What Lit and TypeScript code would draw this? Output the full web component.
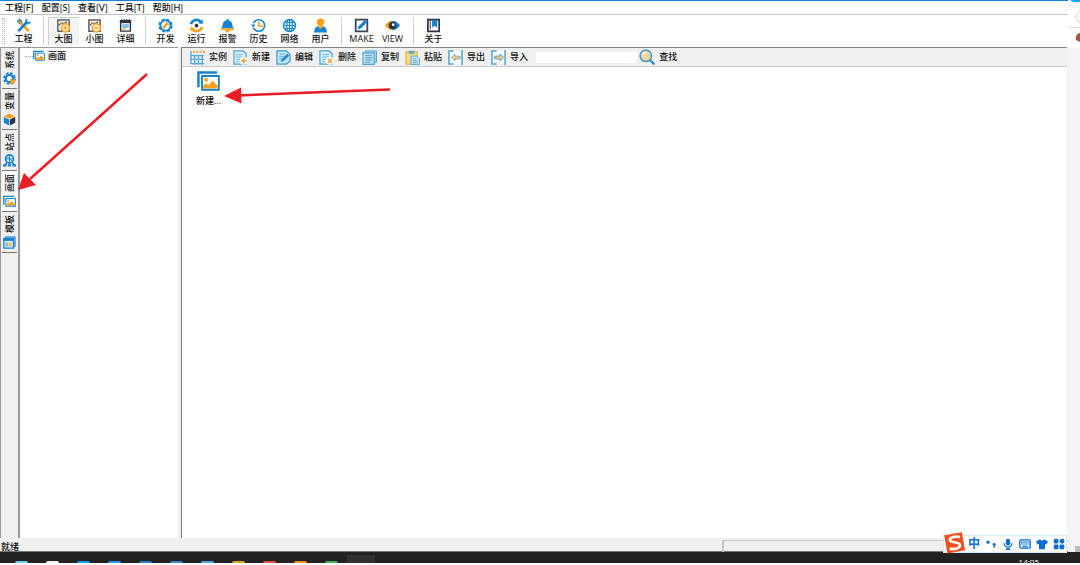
import { LitElement, html, css, svg } from "lit";
import { customElement, state } from "lit/decorators.js";

const B = "#1583cf";
const N = "#2b3440";
const O = "#f9a11b";

const icons: Record<string, unknown> = {
  tools: svg`<path d="M5 5 13.500 14" stroke=${O} stroke-width="3" fill="none"/><path d="M12 4 2.500 14" stroke=${B} stroke-width="2.800" fill="none"/><path d="M1.200 2.600 4 5.400 5.600 3.600 2.900 1M11.500 1l-1 3.400 2 1.400 3-1.600" stroke=${B} stroke-width="1.900" fill="none"/><path d="M2 2l3.500 3.500" stroke=${O} stroke-width="1.500"/>`,
  big: svg`<path d="M2 2h12v12H2z" fill="#fff" stroke="#59606a" stroke-width="1.6"/><path d="m3 8 3-3 2 1 4-2" stroke="#59606a" stroke-width="1.2" fill="none"/><circle cx="5.500" cy="4.800" r="1" fill=${O}/><circle cx="10" cy="10.500" r="4.400" fill="#ffe9c8" stroke=${O} stroke-width="1.6"/><path d="M7.500 10.500h5M10 8v5" stroke=${O} stroke-width="1.4"/>`,
  small: svg`<path d="M2 2h12v12H2z" fill="#fff" stroke="#59606a" stroke-width="1.6"/><path d="m3 8 3-3 2 1 4-2" stroke="#59606a" stroke-width="1.2" fill="none"/><circle cx="5.500" cy="4.800" r="1" fill=${O}/><circle cx="10" cy="10.500" r="4.400" fill="#ffe9c8" stroke=${O} stroke-width="1.6"/><path d="M7.500 10.500h5" stroke=${O} stroke-width="1.4"/>`,
  detail: svg`<path d="M2.8 3h10.4v11H2.8z" fill="#fff" stroke=${N} stroke-width="1.5"/><path d="M2 2.2h12v3.3H2z" fill=${N}/><path d="M4 2.2V1M6.7 2.2V1M9.4 2.2V1M12 2.2V1" stroke=${N}/><path d="M4.5 7.5h7M4.5 9.5h7" stroke=${B} stroke-width="1.1"/><path d="M4.5 11.8h4" stroke=${O} stroke-width="1.2"/>`,
  dev: svg`<circle cx="8" cy="8" r="5.4" fill="#fff" stroke=${B} stroke-width="1.8"/><circle cx="8" cy="8" r="6.8" fill="none" stroke=${B} stroke-width="1.6" stroke-dasharray="3.4 1.94"/><path d="M5.500 10.800 9.800 6.200" stroke=${O} stroke-width="2.4"/><path d="m8.600 4.500 3 3" stroke=${O} stroke-width="1.6"/>`,
  run: svg`<path d="M2 6.500C3.500 1.500 10 .5 12.800 4.200" stroke=${B} stroke-width="2.8" fill="none"/><path d="m14.800 1.500-.3 5-4.700-1z" fill=${B}/><path d="M14 9.500c-1.500 5-8 6-10.800 2.300" stroke=${O} stroke-width="2.8" fill="none"/><path d="m1.200 14.500.3-5 4.700 1z" fill=${O}/><circle cx="8" cy="8" r="2" fill=${N}/>`,
  bell: svg`<path d="M7 1h2v1.300c2.800.5 4.200 2.700 4.200 5.200 0 1.800.8 2.600 1.800 3.500H1c1-.9 1.800-1.700 1.800-3.500C2.800 5 4.200 2.800 7 2.300z" fill=${B}/><path d="M1 11h14v2H1z" fill=${O}/><path d="M5.500 13h5a2.500 2.500 0 0 1-5 0z" fill=${O}/>`,
  history: svg`<circle cx="8.300" cy="8" r="6.200" fill="#fff" stroke=${B} stroke-width="1.7"/><path d="M.5 5.500h4v5h-4z" fill="#fff"/><path d="m0 7 2.300 3L4.800 7z" fill=${B}/><path d="M8.500 4v4.500h4" stroke=${O} stroke-width="1.800" fill="none"/>`,
  net: svg`<circle cx="8" cy="8" r="6.500" fill="#d9eefb" stroke=${B} stroke-width="1.400"/><ellipse cx="8" cy="8" rx="3" ry="6.300" fill="none" stroke=${B} stroke-width="1.100"/><path d="M8 1.700v12.600M2 8h12M3 4.800h10M3 11.200h10" stroke=${B}/>`,
  user: svg`<circle cx="8" cy="4.500" r="4" fill=${O}/><path d="M1.200 15.500c0-4 1.500-6.500 4-6.500h5.600c2.500 0 4 2.500 4 6.500z" fill=${B}/><path d="M6 8h4v2l-2 2-2-2z" fill=${O}/>`,
  make: svg`<path d="M1.800 1.800h12.400v12.400H1.800z" fill="#fff" stroke="#39445a" stroke-width="1.9"/><path d="m4 12 .8-3.300L11.500 2 14 4.500 7.300 11.200z" fill=${B}/>`,
  view: svg`<path d="M0 8C3.500 3.500 6 3 8 3v10C5 13 2.500 11 0 8z" fill=${O}/><path d="M16 8C12.500 3.500 10 3 8 3v10c3 0 5.500-2 8-5z" fill=${B}/><circle cx="8" cy="8" r="4" fill=${N}/><circle cx="8.800" cy="7.200" r="1.500" fill="#fff"/>`,
  about: svg`<path d="M2 1.800h12v12.400H2z" fill="#fff" stroke=${N} stroke-width="1.8"/><path d="M4.500 2v10" stroke=${N}/><path d="M6.500 2h5.500v8.500L9.200 8.300l-2.700 2.200z" fill=${B}/>`,
  sample: svg`<path d="M1 1v14M1 6h14M1 10h14M1 14.500h14M5 5v11M9 5v11M13 5v11" stroke="#58a9dc" stroke-width="1.5"/><path d="M3 2h13" stroke="#e9ae59" stroke-width="2.4" stroke-dasharray="2.200 1.400"/>`,
  add: svg`<path d="M1 1h10l3 3v11H1z" fill="#d6edf9" stroke="#4da3d8" stroke-width="1.3"/><path d="M3.500 5h7M3.500 7.500h7M3.500 10h4M3.500 12.500h3" stroke="#6ab4df"/><circle cx="11.500" cy="11.500" r="4.300" fill="#fff"/><path d="M8.500 11.500h6M11.500 8.500v6" stroke="#eda746" stroke-width="1.800"/>`,
  edit: svg`<path d="M1 1h10l4 4v7l-4 3H1z" fill="#bfe2f5" stroke="#3c9bd6" stroke-width="1.3"/><path d="M3.500 4.500h6M3.500 7h5M3.500 9.500h3" stroke="#6ab4df"/><path d="m5 12.800 1-3L12 4l2 2-6 5.800z" fill="#2684b8"/>`,
  del: svg`<path d="M1 1h10l3 3v11H1z" fill="#d6edf9" stroke="#4da3d8" stroke-width="1.3"/><path d="M3.500 5h7M3.500 7.500h7M3.500 10h4M3.500 12.500h3" stroke="#6ab4df"/><circle cx="11.500" cy="11.500" r="4.300" fill="#fff"/><path d="m9.300 9.300 4.600 4.600M13.900 9.300l-4.600 4.600" stroke="#eda746" stroke-width="1.700"/>`,
  copy: svg`<path d="M3.500 1h12v12h-12z" fill="#a9d5ef" stroke="#4da3d8"/><path d="M1 3h12v12.300H1z" fill="#bfe0f3" stroke="#4da3d8" stroke-width="1.2"/><path d="M3.500 6h7M3.500 8.300h7M3.500 10.600h7M3.500 12.900h5" stroke="#4a9ccf"/>`,
  paste: svg`<path d="M1 2h12v13H1z" fill="#f6dc83" stroke="#dfb743" stroke-width="1.3"/><path d="M4 .8h6V4H4z" fill="#55a7cb"/><path d="M6.500 6.500h6l3 3v6h-9z" fill="#c8e4f3" stroke="#5aa7d0"/><path d="M8.500 9.500h3M8.500 11.500h5M8.500 13.500h5" stroke="#5aa7d0"/>`,
  exp: svg`<path d="M1 1h14v14H1z" fill="#fff"/><path d="M6 1H1v14h5M15 0v16" stroke="#4da3d8" stroke-width="1.6" fill="none"/><path d="m3.500 8 4-3.700v2.200H13v3H7.500v2.200z" fill="#f5ca82" stroke="#61a4bd" stroke-width=".8"/>`,
  imp: svg`<path d="M1 1h14v14H1z" fill="#fff"/><path d="M6 1H1v14h5M15 0v16" stroke="#4da3d8" stroke-width="1.6" fill="none"/><path d="m13.500 8-4-3.700v2.200H4v3h5.500v2.200z" fill="#f5ca82" stroke="#3f97cf" stroke-width=".9"/>`,
  search: svg`<path d="m11 11 4.500 4.500" stroke="#2b86c0" stroke-width="2.200"/><circle cx="6.800" cy="6.800" r="5.700" fill="#f5d6a0" stroke="#4b98c9" stroke-width="1.600"/><path d="M4 6a3 3 0 0 1 3-2.500" stroke="#fff" stroke-width="1.500" fill="none"/>`,
  picture: svg`<path d="M1 12V1.700h13" stroke=${B} stroke-width="1.700" fill="none"/><path d="M3.500 4.200h11.700v9.500H3.500z" fill="#fff" stroke=${B} stroke-width="1.300"/><path d="M4.300 12.900V11l2.200-1.800 1.700 1.300 2.600-3.200 3.600 3.700v1.900z" fill=${O}/><circle cx="6.300" cy="6.800" r="1.300" fill=${O}/>`,
  gear: svg`<circle cx="8" cy="8" r="4.500" fill="#fff" stroke=${B} stroke-width="2.700"/><circle cx="8" cy="8" r="6.700" fill="none" stroke=${B} stroke-width="2.200" stroke-dasharray="3.200 2.060"/><path d="m9 9 5 5M9.500 14.500l5-5" stroke=${O} stroke-width="2.800"/>`,
  cube: svg`<path d="m8 1 7 3-7 3-7-3z" fill=${O}/><path d="m1 5 6.500 3v7.500L1 12z" fill=${B}/><path d="M15 5 8.500 8v7.500L15 12z" fill=${N}/>`,
  station: svg`<circle cx="8" cy="6" r="4.900" fill="#cfe8f8" stroke=${B} stroke-width="2"/><path d="M3.500 6h9M8 1.500v9M5 3.500l6 5" stroke=${B}/><path d="m5 10-3 4.500M11 10l3 4.500M8 11v3" stroke=${B} stroke-width="2"/><path d="M0 14h4.500M11.500 14H16M6 14h4" stroke=${B} stroke-width="2.500"/>`,
  template: svg`<path d="M3 1h12v12H3z" fill="#8ac5e8" stroke=${B}/><path d="M1 3h12v12H1z" fill="#d8ebf4" stroke=${B} stroke-width="1.500"/><path d="M1 3h12v3H1z" fill=${B}/><path d="M3 8h3v5H3z" fill="#7fbce0"/><path d="M7 8h4v5H7z" fill="#f3bd69"/>`,
  comma: svg`<circle cx="4" cy="5.500" r="2.200" fill="#0b6fd6"/><path d="M10 8.500a2 2 0 1 1 4.300.5c-.2 2.200-1.300 3.800-3.300 4.500l-.5-1c1-.6 1.500-1.300 1.500-2.200-1.200 0-2-.8-2-1.800z" fill="#0b6fd6"/>`,
  mic: svg`<rect x="5" y="1" width="6" height="9" rx="3" fill="#0b6fd6"/><path d="M2.800 7a5.200 5.200 0 0 0 10.400 0M8 12v3M5 15h6" stroke="#0b6fd6" stroke-width="1.700" fill="none"/>`,
  keyboard: svg`<rect x="1" y="2.500" width="14" height="11" rx="1.500" fill="#dcecfb" stroke="#0b6fd6" stroke-width="1.700"/><path d="M3 5.500h10M3 8h10" stroke="#0b6fd6" stroke-width="1.500" stroke-dasharray="1.800 1"/><path d="M4.500 11h7" stroke="#0b6fd6" stroke-width="1.500"/>`,
  shirt: svg`<path d="m5 1.500 3 2 3-2 5 3-2 4-2-.8V15H4V7.700l-2 .8-2-4z" fill="#0b6fd6"/>`,
  apps: svg`<g fill="#0b6fd6"><rect x="1" y="1" width="6.300" height="6.300" rx="2"/><circle cx="12" cy="4.200" r="3.300"/><rect x="1" y="8.700" width="6.300" height="6.300" rx="1.500"/><rect x="8.700" y="8.700" width="6.300" height="6.300" rx="1.500"/></g>`,
  sogou: svg`<path d="M.5 2.400 13.300.2l2.400 13L2.800 15.600z" fill="#f0501e"/><path d="M12 3.600C8.500 3 4.500 3.500 4.600 5.700c.2 2.400 7.200 1.200 7.400 3.900.2 2.300-4 3.200-7.500 2.500" stroke="#fff" stroke-width="1.900" fill="none"/>`,
};

const icon = (name: string, cls = "") =>
  html`<svg class="icon ${cls}" viewBox="0 0 16 16" aria-hidden="true">${icons[name]}</svg>`;

const menus = ["工程[F]", "配置[S]", "查看[V]", "工具[T]", "帮助[H]"];

const groups = [
  [["tools", "工程"]],
  [["big", "大图"], ["small", "小图"], ["detail", "详细"]],
  [["dev", "开发"], ["run", "运行"], ["bell", "报警"], ["history", "历史"], ["net", "网络"], ["user", "用户"]],
  [["make", "MAKE"], ["view", "VIEW"]],
  [["about", "关于"]],
];

const actions = [
  ["sample", "实例"], ["add", "新建"], ["edit", "编辑"], ["del", "删除"],
  ["copy", "复制"], ["paste", "粘贴"], ["exp", "导出"], ["imp", "导入"],
];

const tabs = [
  ["gear", "系统"], ["cube", "变量"], ["station", "站点"], ["picture", "画面"], ["template", "模板"],
];

const taskColors = [
  "#6fd0f5", "#f4f4f4", "#17a2e6", "#2a93ee", "#2580c8", "#3d85d6",
  "#4da6ee", "#d9a322", "#e8533f", "#f08a24", "#3fae5c",
];

@customElement("app-root")
export class AppRoot extends LitElement {
  @state() private size = "大图";
  @state() private tab = "画面";

  static styles = css`
    :host {
      display: grid;
      grid-template-columns: minmax(0, 1fr) 12px;
      grid-template-rows: minmax(0, 1fr) 11px;
      position: relative;
      box-sizing: border-box;
      height: 100vh;
      padding-bottom: 2px;
      overflow: hidden;
      background: #fff;
      color: #111;
      font: 500 9px/12px "Open Sans", "Noto Sans CJK SC", sans-serif;
    }
    button, input { font: inherit; color: inherit; border: 0; margin: 0; padding: 0; background: none; }
    .icon { display: block; width: 15px; height: 15px; flex: none; }
    .window { display: flex; flex-direction: column; min-height: 0; border-top: 1px solid #1380dc; background: #f0f0f0; }
    .menu { display: flex; gap: 8px; height: 13px; padding-left: 5px; background: #fff; border-bottom: 1px solid #c4c4c4; font-family: Lato, "Noto Sans CJK SC", sans-serif; }
    .menu button { line-height: 13px; white-space: nowrap; }
    .tools { display: flex; height: 32px; padding-left: 2px; background: #fff; }
    .grip { width: 1px; margin: 3px 2px 3px 0; border-left: 1px dotted #b0b0b0; border-right: 1px dotted #b0b0b0; }
    .group { display: flex; padding: 1px 4px 0 4px; border-right: 1px solid #cfcfcf; margin: 2px 0; }
    .group:first-of-type { padding-left: 1px; }
    .group:nth-of-type(n + 3) { padding-right: 5px; }
    .group:last-child { border: 0; }
    .tool { display: flex; flex-direction: column; align-items: center; width: 31px; margin-top: -1px; padding-top: 1px; }
    .tool.on { background: #f4f4f4; box-shadow: inset 1px 1px #cfcfcf; }
    .body { display: grid; grid-template-columns: 18px 161px minmax(0, 1fr); flex: 1; min-height: 0; }
    .tabs { border-top: 1px solid #999; border-left: 1px solid #999; padding-left: 1px; }
    .tab { display: flex; align-items: center; justify-content: center; gap: 3px; width: 15px; height: 40px; writing-mode: vertical-rl; text-orientation: sideways; transform: rotate(180deg); border-top: 1px solid #777; line-height: 14px; box-sizing: content-box; }
    .tab .icon { width: 13px; height: 13px; transform: rotate(180deg); }
    .tab.on { background: #f8f8f8; }
    .tree { background: #fff; border-top: 1px solid #999; border-left: 2px solid #999; padding: 2px 0 0 5px; margin-right: 1px; }
    .node { display: flex; align-items: center; }
    .twig { width: 8px; border-top: 1px dotted #aaa; }
    .node .icon { width: 12px; height: 12px; margin-right: 2px; }
    .label { background: #f0f0f0; padding: 0 1px; }
    .pane { display: flex; flex-direction: column; min-width: 0; margin: 0 1px 0 2px; border-top: 1px solid #888; border-left: 1px solid #777; background: #fff; }
    .actions { display: flex; align-items: center; gap: 6px; height: 18px; padding-left: 8px; background: #f0f0f0; border-bottom: 1px solid #ccc; }
    .action { display: flex; align-items: center; gap: 4px; white-space: nowrap; }
    .find { display: flex; align-items: center; gap: 2px; padding-left: 2px; }
    .find input { width: 101px; height: 11px; background: #fff; }
    .find .icon { width: 16px; height: 16px; }
    .files { flex: 1; padding: 3px 0 0 12px; }
    .file { display: flex; flex-direction: column; align-items: center; gap: 2px; width: 29px; }
    .file .icon { width: 23px; height: 23px; }
    .status { display: grid; grid-template-columns: minmax(0, 722fr) minmax(0, 346fr); height: 11px; margin-top: 2px; border-bottom: 1px solid #777; }
    .status span { padding-left: 1px; line-height: 14px; }
    .status span + span { border-left: 2px solid #c6c6c6; border-top: 1px solid #c6c6c6; }
    .side { display: flex; flex-direction: column; justify-content: space-between; background: #f3f4f6; overflow: hidden; }
    .side svg { display: block; width: 12px; height: 48px; }
    .corner { height: 6px; margin-left: 7px; background: #bcbcbc; }
    .taskbar { grid-column: 1 / -1; display: flex; justify-content: space-between; align-items: flex-end; height: 11px; background: #222; }
    .dock { display: flex; gap: 18px; padding-left: 15px; align-items: flex-end; }
    .app { width: 13px; height: 2px; border-radius: 2px 2px 0 0; background: var(--tint); }
    .active { width: 28px; height: 8px; margin-left: -9px; background: #303030; }
    .clock { height: 5px; margin-right: 41px; font-size: 8px; line-height: 8px; color: #fff; overflow: hidden; }
    .ime { position: absolute; right: 13px; bottom: 12px; display: flex; align-items: center; gap: 5px; height: 18px; box-sizing: border-box; padding: 0 1px 0 24px; background: #fff; border: 1px solid #dce8f5; color: #0b6fd6; }
    .ime .icon { width: 12px; height: 12px; }
    .ime .logo { position: absolute; left: -1px; bottom: -2px; width: 23px; height: 22px; }
    .ime b { font-size: 12px; line-height: 16px; }
    .arrows { position: absolute; left: 0; top: 0; width: 400px; height: 200px; pointer-events: none; }
  `;

  render() {
    return html`
      <main class="window">
        <nav class="menu">${menus.map((m) => html`<button>${m}</button>`)}</nav>
        <div class="tools">
          <span class="grip"></span>
          ${groups.map((g) => html`<div class="group">${g.map(([i, t]) => html`
            <button class="tool ${t === this.size ? "on" : ""}"
              @click=${() => { if (t === "大图" || t === "小图" || t === "详细") this.size = t; }}>
              ${icon(i)}<span>${t}</span>
            </button>`)}</div>`)}
        </div>
        <div class="body">
          <nav class="tabs">${tabs.map(([i, t]) => html`
            <button class="tab ${t === this.tab ? "on" : ""}" @click=${() => (this.tab = t)}>
              ${icon(i)}<span>${t}</span>
            </button>`)}</nav>
          <aside class="tree">
            <div class="node"><span class="twig"></span>${icon("picture")}<span class="label">画面</span></div>
          </aside>
          <section class="pane">
            <div class="actions">
              ${actions.map(([i, t]) => html`<button class="action">${icon(i)}<span>${t}</span></button>`)}
              <div class="find">
                <input type="text" aria-label="查找" />
                <button class="action">${icon("search")}<span>查找</span></button>
              </div>
            </div>
            <div class="files"><button class="file">${icon("picture")}<span>新建...</span></button></div>
          </section>
        </div>
        <footer class="status"><span>就绪</span><span></span></footer>
      </main>
      <aside class="side">
        <svg viewBox="0 0 12 48" aria-hidden="true">
          <path d="M0 8h12v40H0z" fill="#fff"/><path d="M2 0h10v2H5z" fill="#0ea5f5"/>
          <path d="M0 27.500h12" stroke="#ddd"/><path d="m12 11-5 6 5 6" stroke="#ccc" fill="none"/>
          <path d="M12 33c-3 0-5 4-4 7l4 2z" fill="#a85a43"/>
        </svg>
        <span class="corner"></span>
      </aside>
      <footer class="taskbar">
        <div class="dock">
          ${taskColors.map((c) => html`<span class="app" style="--tint:${c}"></span>`)}
          <span class="active"></span>
        </div>
        <span class="clock">14:05</span>
      </footer>
      <div class="ime">
        ${icon("sogou", "logo")}<b>中</b>${["comma", "mic", "keyboard", "shirt", "apps"].map((i) => icon(i))}
      </div>
      <svg class="arrows" viewBox="0 0 400 200" aria-hidden="true">
        <g stroke="#ec1c24" stroke-width="2.5" fill="#ec1c24">
          <path d="M147 74 30 179"/><path d="M390 89.500 238 95.500"/>
          <path d="m18 190 6-17 12 12zM224 96l17-8.500.6 16z" stroke="none"/>
        </g>
      </svg>
    `;
  }
}
